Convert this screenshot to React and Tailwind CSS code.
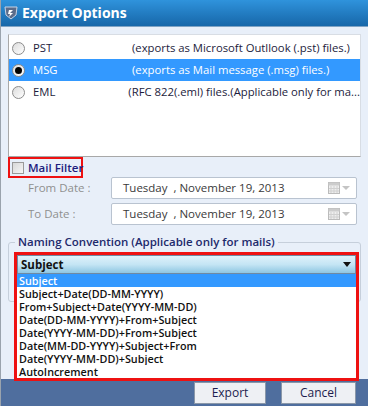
import { useState } from "react";

/* Export Options dialog — radio list, mail filter and naming convention dropdown */

const formats = [
  { id: "pst", label: "PST", desc: "(exports as Microsoft Outllook (.pst) files.)" },
  { id: "msg", label: "MSG", desc: "(exports as Mail message (.msg) files.)" },
  { id: "eml", label: "EML", desc: "(RFC 822(.eml) files.(Applicable only for ma..." },
];

const namings = [
  "Subject",
  "Subject+Date(DD-MM-YYYY)",
  "From+Subject+Date(YYYY-MM-DD)",
  "Date(DD-MM-YYYY)+From+Subject",
  "Date(YYYY-MM-DD)+From+Subject",
  "Date(MM-DD-YYYY)+Subject+From",
  "Date(YYYY-MM-DD)+Subject",
  "AutoIncrement",
];

function Radio({ checked }) {
  return (
    <span className="w-[13px] h-[13px] rounded-full border border-[#8c8c8c] bg-gradient-to-br from-[#dcdcdc] to-white flex items-center justify-center shrink-0">
      {checked && <span className="w-[7px] h-[7px] rounded-full bg-black" />}
    </span>
  );
}

function DateBox() {
  return (
    <div className="w-[246px] h-[22px] bg-white border border-[#b9c3d0] rounded-[2px] flex items-center pl-[11px] pr-[6px] text-[11.5px] text-[#3a3a3a]">
      <span className="flex-1 whitespace-pre">Tuesday  , November 19, 2013</span>
      <svg width="12" height="12" viewBox="0 0 12 12" className="mr-[2px]">
        <rect x="0.5" y="0.5" width="11" height="11" fill="#eee" stroke="#bbb" />
        <rect x="0.5" y="0.5" width="11" height="3" fill="#ccc" />
        <path d="M3 4v7M6 4v7M9 4v7M1 6.5h10M1 9h10" stroke="#d0d0d0" strokeWidth="1" />
      </svg>
      <svg width="8" height="5" viewBox="0 0 8 5">
        <path d="M0 0h8L4 4z" fill="#c4c4c4" />
      </svg>
    </div>
  );
}

export default function App() {
  const [format] = useState("msg");

  return (
    <div
      className="w-[368px] h-[406px] flex flex-col overflow-hidden bg-[#e8eff9] border-l border-[#9aa3ad]"
      style={{ fontFamily: '"Open Sans", "Noto Sans", sans-serif' }}
    >
      {/* Title bar */}
      <header className="h-[27px] shrink-0 flex items-center gap-[4px] pl-[3px] bg-gradient-to-b from-[#2f93dc] to-[#1767a9] border-b border-[#7fa3c4]">
        <svg width="14" height="14" viewBox="0 0 14 14">
          <path d="M1 1h12l-1 8-5 4-5-4z" fill="#5b6c8a" stroke="#c8d4e6" strokeWidth="1" />
          <path d="M5 4h4l-3 3h3l-4 4 1-3H4z" fill="#fff" />
        </svg>
        <span className="text-white font-bold text-[14px] leading-none">Export Options</span>
      </header>

      <div className="flex-1 flex flex-col px-[7px] pt-[7px]">
        {/* Format list */}
        <div className="h-[123px] bg-white border border-[#a8a8a8] border-t-[#d8dde4] border-r-[#d8dde4] pt-[2px]">
          {formats.map((f) => {
            const on = f.id === format;
            return (
              <div
                key={f.id}
                className={`h-[22px] flex items-center text-[11.3px] ${on ? "bg-[#3399ff] text-white" : "text-[#1c1c3c]"}`}
              >
                <span className="pl-[3px] flex">
                  <Radio checked={on} />
                </span>
                <span className="w-[107px] pl-[8px]">{f.label}</span>
                <span className="whitespace-nowrap">{f.desc}</span>
              </div>
            );
          })}
        </div>

        {/* Mail filter */}
        <div className="w-[75px] h-[21px] border-2 border-[#ee1111] flex items-center gap-[4px] pl-[2px]">
          <span className="w-[12px] h-[12px] shrink-0 border border-[#9a9a9a] bg-gradient-to-br from-[#d8d8d8] to-[#f6f6f6]" />
          <span className="text-[11.5px] font-semibold text-[#1d1d7e] leading-none whitespace-nowrap">Mail Filter</span>
        </div>

        <div className="flex flex-col gap-[4px] mt-[-1px]">
          <div className="flex items-center">
            <span className="w-[103px] pl-[20px] text-[11.5px] text-[#8f8f8f]">From Date :</span>
            <DateBox />
          </div>
          <div className="flex items-center">
            <span className="w-[103px] pl-[20px] text-[11.5px] text-[#8f8f8f]">To Date :</span>
            <DateBox />
          </div>
        </div>

        {/* Naming convention */}
        <div className="relative mt-[17px] border border-[#c6cfdb] rounded-[3px] h-[60px]">
          <span className="absolute -top-[10px] left-[6px] px-[3px] bg-[#e8eff9] text-[11.5px] font-semibold text-[#1e2a6c] leading-[18px] whitespace-nowrap">
            Naming Convention (Applicable only for mails)
          </span>
          <div className="relative mt-[9px] ml-[5px] mr-[1px] h-[22px]">
            <div className="absolute inset-x-0 top-0 z-10 border-[3px] border-[#ee1111] bg-white">
              <div className="h-[19px] flex items-center justify-between pl-[3px] pr-[4px] border border-[#6f8aa3] bg-gradient-to-b from-[#dff1fa] via-[#c4e5f4] to-[#8ec6e2] text-[11.5px] font-bold text-[#111]">
                <span>Subject</span>
                <svg width="8" height="5" viewBox="0 0 8 5">
                  <path d="M0 0h8L4 5z" fill="#111" />
                </svg>
              </div>
              <ul className="text-[10.8px] font-semibold text-[#111]">
                {namings.map((n, i) => (
                  <li
                    key={n}
                    className={`pl-[2px] h-[13px] leading-[13px] whitespace-nowrap overflow-hidden ${i === 0 ? "bg-[#3399ff] text-white" : ""}`}
                  >
                    {n}
                  </li>
                ))}
              </ul>
            </div>
          </div>
        </div>
      </div>

      {/* Footer */}
      <footer className="h-[27px] shrink-0 flex items-center justify-end gap-[15px] pr-[12px] bg-[#4f6e9e]">
        <button className="w-[72px] h-[22px] bg-[#eef0f4] border border-[#8a97a8] text-[12px] text-[#1c1c4e]">Export</button>
        <button className="w-[75px] h-[22px] bg-[#eef0f4] border border-[#8a97a8] text-[12px] text-[#1c1c4e]">Cancel</button>
      </footer>
    </div>
  );
}
